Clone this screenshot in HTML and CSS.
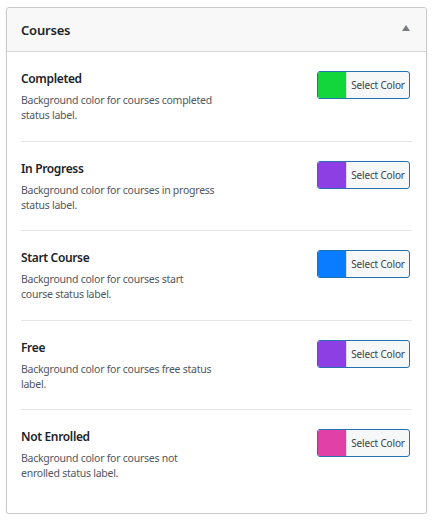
FILE: index.html
```html
<!DOCTYPE html>
<html>
<head>
<meta charset="utf-8">
<link rel="stylesheet" href="styles.css">
</head>
<body>
<div class="card">
  <div class="card-head">
    <h2 class="card-title">Courses</h2>
    <span class="toggle"></span>
  </div>
  <div class="card-body">
    <div class="row">
      <div class="info">
        <div class="label">Completed</div>
        <div class="desc">Background color for courses completed status label.</div>
      </div>
      <button class="picker"><span class="swatch green"></span><span class="picker-text">Select Color</span></button>
    </div>
    <div class="row">
      <div class="info">
        <div class="label">In Progress</div>
        <div class="desc">Background color for courses in progress status label.</div>
      </div>
      <button class="picker"><span class="swatch purple"></span><span class="picker-text">Select Color</span></button>
    </div>
    <div class="row">
      <div class="info">
        <div class="label">Start Course</div>
        <div class="desc">Background color for courses start course status label.</div>
      </div>
      <button class="picker"><span class="swatch blue"></span><span class="picker-text">Select Color</span></button>
    </div>
    <div class="row">
      <div class="info">
        <div class="label">Free</div>
        <div class="desc">Background color for courses free status label.</div>
      </div>
      <button class="picker"><span class="swatch purple"></span><span class="picker-text">Select Color</span></button>
    </div>
    <div class="row">
      <div class="info">
        <div class="label">Not Enrolled</div>
        <div class="desc">Background color for courses not enrolled status label.</div>
      </div>
      <button class="picker"><span class="swatch pink"></span><span class="picker-text">Select Color</span></button>
    </div>
  </div>
</div>
</body>
</html>
```
FILE: styles.css
```css
html, body {
  margin: 0;
  padding: 0;
  background: #ffffff;
}
body {
  padding: 7px 7px 0 6px;
  font-family: "Noto Sans", "Open Sans", sans-serif;
  color: #1d2327;
}
.card {
  width: 421px;
  box-sizing: border-box;
  border: 1px solid #c9cacd;
  border-radius: 3px;
  box-shadow: 0 1px 2px rgba(0,0,0,0.08);
  background: #fff;
}
.card-head {
  height: 44px;
  box-sizing: border-box;
  background: #f8f8f8;
  border-bottom: 1px solid #d3d4d6;
  display: flex;
  align-items: center;
  justify-content: space-between;
  padding: 0 16px 0 14px;
  border-radius: 3px 3px 0 0;
}
.card-title {
  margin: 0;
  font-size: 13px;
  font-weight: 600;
  color: #1d2327;
  letter-spacing: -0.2px;
}
.toggle {
  width: 0;
  height: 0;
  border-left: 4px solid transparent;
  border-right: 4px solid transparent;
  border-bottom: 6px solid #787c82;
  margin-top: -4px;
}
.card-body {
  padding: 0 14px 14px 14px;
}
.row {
  display: flex;
  justify-content: space-between;
  align-items: flex-start;
  padding: 18px 2px 17.5px 0;
  border-bottom: 1px solid #e5e5e6;
}
.row:last-child {
  border-bottom: none;
}
.info {
  width: 194px;
}
.label {
  font-size: 12px;
  font-weight: 600;
  line-height: 18px;
  color: #1d2327;
  letter-spacing: -0.35px;
}
.desc {
  margin-top: 5px;
  font-size: 10.5px;
  line-height: 15px;
  color: #50575e;
  letter-spacing: -0.25px;
}
.picker {
  display: flex;
  align-items: stretch;
  margin-top: 1px;
  padding: 0;
  height: 28px;
  width: 93px;
  box-sizing: border-box;
  border: 1px solid #2271b1;
  border-radius: 3px;
  background: #f6f7f7;
  overflow: hidden;
  font-family: inherit;
  cursor: pointer;
}
.swatch {
  width: 28px;
  flex: none;
  border-right: 1px solid #dcdcde;
}
.picker-text {
  flex: 1;
  display: flex;
  align-items: center;
  justify-content: center;
  font-size: 10px;
  color: #3c434a;
  letter-spacing: -0.15px;
}
.green { background: #12d63c; }
.purple { background: #8e3fe4; }
.blue { background: #0a7cff; }
.pink { background: #e141a6; }
```
